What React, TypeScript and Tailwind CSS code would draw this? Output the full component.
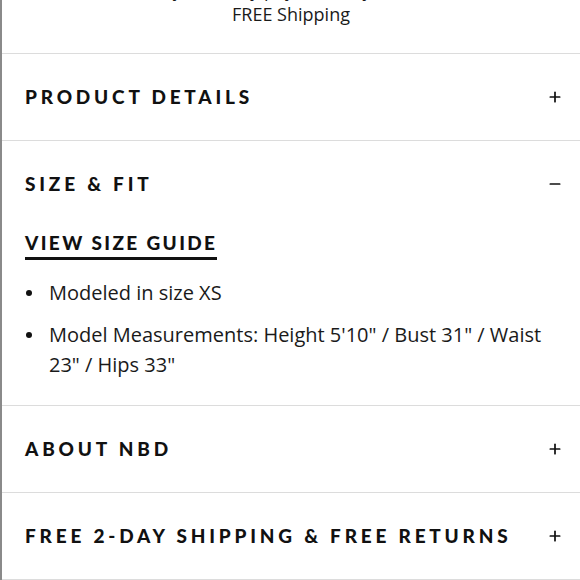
import { Plus, Minus } from 'lucide-react';

const font = 'font-["Lato",sans-serif] text-[19px] font-black uppercase text-[#111]';
const body = 'font-["Open_Sans",sans-serif] text-[20px] text-[#1a1a1a]';

function Row({ title, open }: { title: string; open?: boolean }) {
  return (
    <div className="flex h-[86px] items-center justify-between pl-[23px] pr-[17px]">
      <h3 className={`${font} tracking-[0.2em]`}>{title}</h3>
      {open ? (
        <Minus size={16} strokeWidth={2.6} className="text-[#111]" />
      ) : (
        <Plus size={16} strokeWidth={2.6} className="text-[#111]" />
      )}
    </div>
  );
}

export default function App() {
  return (
    <div className="h-[580px] w-[580px] overflow-hidden bg-white">
      <div className="h-full border-l-2 border-[#8a8a8a]">
        <div className="flex h-[54px] flex-col items-center border-b border-[#dcdcdc]">
          <p className='-mt-[22px] font-["Open_Sans",sans-serif] text-[18px] leading-[24px] text-[#1a1a1a]'>
            Pay in 4 easy payments by Klarna
          </p>
          <p className='font-["Open_Sans",sans-serif] text-[18px] leading-[24px] text-[#1a1a1a]'>FREE Shipping</p>
        </div>

        <div className="border-b border-[#dcdcdc]">
          <Row title="Product Details" />
        </div>

        <div className="border-b border-[#dcdcdc]">
          <Row title="Size & Fit" open />
          <div className="flex flex-col items-start pb-[25px] pl-[23px] pr-[20px]">
            <a
              href="#"
              className={`${font} mt-[7px] border-b-[3px] border-[#111] pb-[5px] leading-[18px] tracking-[0.125em]`}
            >
              View Size Guide
            </a>
            <ul className="mt-[18px] flex flex-col gap-[12px]">
              <li className={`${body} flex gap-[17px] leading-[30px]`}>
                <span className="mt-[12px] ml-[1px] h-[6px] w-[6px] flex-none rounded-full bg-[#111]" />
                <span>Modeled in size XS</span>
              </li>
              <li className={`${body} flex gap-[17px] leading-[30px]`}>
                <span className="mt-[12px] ml-[1px] h-[6px] w-[6px] flex-none rounded-full bg-[#111]" />
                <span>Model Measurements: Height 5'10" / Bust 31" / Waist 23" / Hips 33"</span>
              </li>
            </ul>
          </div>
        </div>

        <div className="border-b border-[#dcdcdc]">
          <Row title="About NBD" />
        </div>

        <div className="border-b border-[#dcdcdc]">
          <Row title="Free 2-Day Shipping & Free Returns" />
        </div>
      </div>
    </div>
  );
}
